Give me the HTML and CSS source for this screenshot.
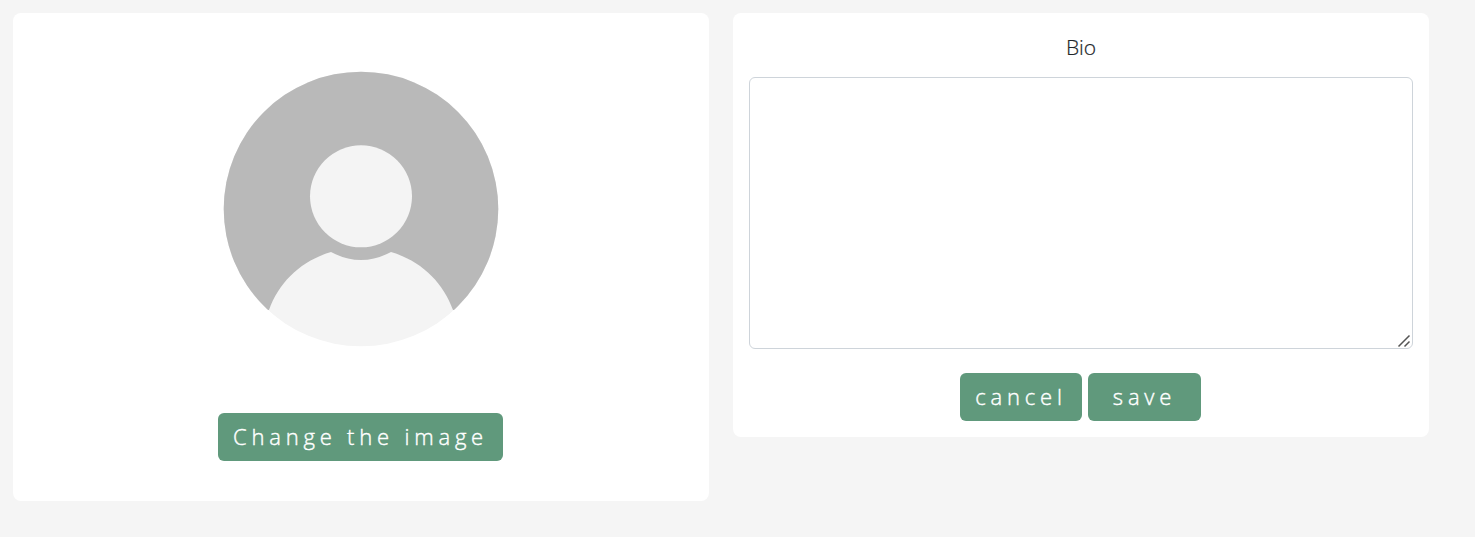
FILE: index.html
```html
<!DOCTYPE html>
<html lang="en">
<head>
<meta charset="utf-8">
<title>Edit profile</title>
<link rel="stylesheet" href="styles.css">
</head>
<body>
<main class="profile">
  <section class="card card-photo">
    <svg class="avatar" viewBox="0 0 276 276" role="img" aria-label="Profile picture">
      <defs><clipPath id="upper"><path d="M0 0H276V239H230L138 215L46 239H0Z"/></clipPath></defs>
      <circle cx="138" cy="138" r="137.300" fill="#f4f4f4"/>
      <circle cx="138" cy="138" r="137.300" fill="#b9b9b9" clip-path="url(#upper)"/>
      <path d="M108 181Q138 197 168 181C198 190 220 211 230 239L220 247H56L46 239C56 211 78 190 108 181Z" fill="#f4f4f4"/>
      <circle cx="138" cy="125.300" r="51" fill="#f4f4f4"/>
    </svg>
    <button class="btn btn-change" type="button"><span class="label">Change the image</span></button>
  </section>
  <section class="card card-bio">
    <label class="bio-label" for="bio"><span class="label">Bio</span></label>
    <div class="bio-field">
      <textarea class="bio-input" id="bio"></textarea>
      <svg class="grip" viewBox="0 0 14 14" aria-hidden="true"><path d="M1.500 12.500L12.500 1.500M7.500 12.500L12.500 7.500"/></svg>
    </div>
    <div class="actions">
      <button class="btn btn-cancel" type="button"><span class="label">cancel</span></button>
      <button class="btn btn-save" type="button"><span class="label">save</span></button>
    </div>
  </section>
</main>
</body>
</html>
```
FILE: styles.css
```css
* { box-sizing: border-box; }
body { margin: 0; background: #f5f5f5; color: #212529; font-family: "Open Sans", sans-serif; }
.profile { display: flex; align-items: flex-start; gap: 24px; padding: 13px; }
.card { width: 696px; background: #fff; border-radius: 8px; display: flex; flex-direction: column; align-items: center; }
.card-photo { height: 488px; padding-top: 58px; }
.avatar { width: 276px; height: 276px; display: block; }
.btn { height: 48px; padding: 0 0 2px; border: 0; border-radius: 6px; background: #60997c; color: #fff; font-family: "Open Sans", sans-serif; font-size: 22px; line-height: 46px; font-weight: 300; letter-spacing: 4.8px; white-space: nowrap; -webkit-text-stroke: 0.4px currentColor; }
.btn-change { width: 285px; margin: 66px 1px 0 0; }
.card-bio { height: 424px; padding: 19px 16px 16px; }
.bio-label { font-size: 21px; line-height: 30px; font-weight: 300; -webkit-text-stroke: 0.2px currentColor; }
.bio-field { position: relative; width: 664px; height: 272px; margin-top: 15px; }
.bio-input { display: block; width: 100%; height: 100%; border: 1px solid #ced4da; border-radius: 6px; background: #fff; resize: none; }
.grip { position: absolute; right: 2px; bottom: 1px; width: 14px; height: 14px; fill: none; stroke: #555; stroke-width: 1.5; pointer-events: none; }
.actions { display: flex; gap: 6px; margin: 24px 1px 0 0; }
.btn-cancel { width: 122px; }
.btn-save { width: 113px; }
```
